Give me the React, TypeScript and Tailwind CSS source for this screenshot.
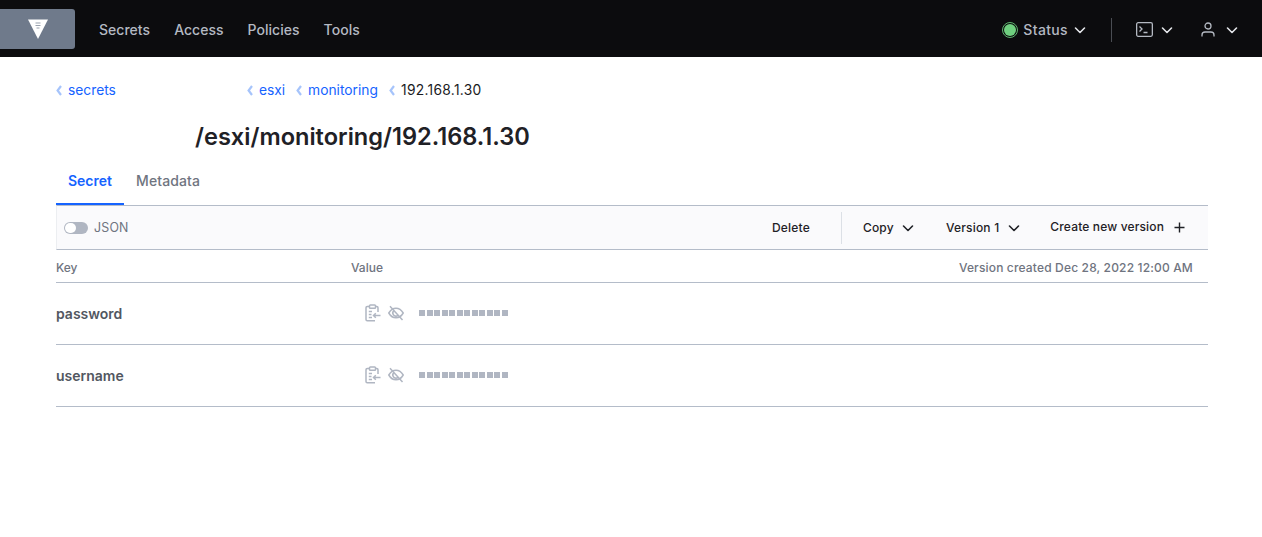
import React from "react";

const Chev = ({ className = "" }: { className?: string }) => (
  <svg width="14" height="14" viewBox="0 0 14 14" fill="none" stroke="currentColor" strokeWidth="1.6" className={className}>
    <path d="M2.5 5 L7 9.5 L11.5 5" strokeLinecap="round" strokeLinejoin="round" />
  </svg>
);

const CrumbChev = () => (
  <svg width="6" height="11" viewBox="0 0 6 11" fill="none" stroke="#a6c4fb" strokeWidth="2.2" className="mr-[6px]">
    <path d="M5 1 L1.6 5.5 L5 10" />
  </svg>
);

const Crumb = ({ label, className = "" }: { label: string; className?: string }) => (
  <span className={`flex items-center ${className}`}>
    <CrumbChev />
    <span className="text-[#1563ff]">{label}</span>
  </span>
);

const ClipIcon = () => (
  <svg width="16" height="18" viewBox="0 0 16 18" fill="none" stroke="#b0b6c2" strokeWidth="1.5">
    <path d="M13 8 V3.8 A1.2 1.2 0 0 0 11.8 2.6 H10.5 M4.5 2.6 H2.2 A1.2 1.2 0 0 0 1 3.8 V15.5 A1.2 1.2 0 0 0 2.2 16.7 H10" />
    <rect x="4.5" y="1" width="6" height="3.2" rx="0.8" />
    <path d="M3.8 7.5 H7 M3.8 10.5 H6.5 M3.8 13.5 H7 M15.5 11.5 H8.5 M10.8 9.2 L8.5 11.5 L10.8 13.8" />
  </svg>
);

const EyeOff = () => (
  <svg width="16" height="16" viewBox="0 0 16 16" fill="none" stroke="#b0b6c2" strokeWidth="1.5">
    <path d="M0.8 8 C3 4.2 5.5 3.2 8 3.2 C10.5 3.2 13 4.2 15.2 8 C13 11.8 10.5 12.8 8 12.8 C5.5 12.8 3 11.8 0.8 8 Z" />
    <path d="M5.8 5.8 A3 3 0 0 0 10.2 10.2" />
    <path d="M2 1.2 L14.5 15" />
  </svg>
);

const Row = ({ name }: { name: string }) => (
  <div className="flex h-[62px] items-center border-b border-[#b4bcc9]">
    <div className="w-[295px] text-sm font-semibold text-[#525761] pt-px">{name}</div>
    <div className="flex items-center pl-[14px] pb-px">
      <ClipIcon />
      <span className="ml-[7px]"><EyeOff /></span>
      <div className="ml-[15px] flex gap-[1.55px]">
        {Array.from({ length: 12 }).map((_, i) => (
          <span key={i} className="h-[6px] w-[6px] bg-[#b0b6c2]" />
        ))}
      </div>
    </div>
  </div>
);

export default function App() {
  return (
    <div className="min-h-[537px] bg-white font-['Inter',sans-serif]">
      <header className="flex h-[57px] items-center bg-[#0c0c0e] pt-px">
        <div className="flex h-10 w-[75px] items-center justify-center rounded-r-[3px] bg-[#6f7a8b]">
          <svg width="20" height="20" viewBox="0 0 20 20">
            <path d="M0 0.5 H20 L10 20 Z" fill="#fff" />
            <path d="M7.5 4 H12.5 M7.5 6.5 H12.5 M8.5 9 H11.5" stroke="#9aa2ae" strokeWidth="1.2" />
          </svg>
        </div>
        <nav className="ml-6 mt-px flex gap-6 text-sm font-medium tracking-[0.03px] text-[#b4b9c2]">
          <span>Secrets</span>
          <span>Access</span>
          <span>Policies</span>
          <span>Tools</span>
        </nav>
        <div className="ml-auto mt-px flex items-center text-[#b4b9c2]">
          <span className="h-4 w-4 rounded-full border-[1.5px] border-[#5fb56f] bg-[#6fd07f] bg-clip-content p-px" />
          <span className="ml-[5px] text-sm font-medium tracking-[0.35px]">Status</span>
          <Chev className="ml-[5px] text-[#e4e6ea]" />
          <span className="ml-6 h-6 w-px bg-[#4a4d53]" />
          <svg width="17" height="15" viewBox="0 0 17 15" fill="none" stroke="#b4b9c2" strokeWidth="1.3" className="ml-6">
            <rect x="0.65" y="0.65" width="15.7" height="13.7" rx="1.5" />
            <path d="M3.5 4.5 L6 7 L3.5 9.5 M7.5 10.5 H11.5" />
          </svg>
          <Chev className="ml-[7px] text-[#e4e6ea]" />
          <svg width="14" height="15" viewBox="0 0 14 15" fill="none" stroke="#b4b9c2" strokeWidth="1.3" className="ml-[27px]">
            <circle cx="7" cy="4" r="3" />
            <path d="M1 14.5 V13 A3 3 0 0 1 4 10 H10 A3 3 0 0 1 13 13 V14.5" />
          </svg>
          <Chev className="ml-[10px] mr-[23px] text-[#e4e6ea]" />
        </div>
      </header>

      <main className="pl-14 pr-[54px]">
        <div className="mt-[25px] flex h-[17px] items-center text-[13.8px] leading-none">
          <Crumb label="secrets" />
          <Crumb label="esxi" className="ml-[131px]" />
          <Crumb label="monitoring" className="ml-[11px]" />
          <span className="ml-[11px] flex items-center">
            <CrumbChev />
            <span className="tracking-[0.3px] text-[#1a1b1e]">192.168.1.30</span>
          </span>
        </div>

        <h1 className="mt-[23px] h-[30px] pl-[139px] text-[23.6px] font-semibold leading-[30px] text-[#1f2126]">
          /esxi/monitoring/192.168.1.30
        </h1>

        <div className="mt-[13px] flex h-[40px] text-sm font-medium">
          <span className="flex w-[68px] items-center justify-center border-b-2 border-[#1563ff] pb-[7px] font-semibold text-[#1563ff]">Secret</span>
          <span className="flex items-center px-3 pb-2 tracking-[0.1px] text-[#6f7480]">Metadata</span>
        </div>

        <div className="flex h-[45px] items-center border-y border-[#b4bcc9] border-l border-l-[#eceef1] bg-[#fafafc] text-xs font-medium tracking-[0.2px] text-[#1f2126]">
          <span className="ml-[7px] flex h-3 w-6 items-center rounded-full bg-[#b0b6c2]">
            <span className="ml-px h-[10px] w-[11px] rounded-full bg-white" />
          </span>
          <span className="ml-[6px] pt-px text-[12.4px] font-normal text-[#6f7480]">JSON</span>
          <div className="ml-auto flex items-center">
            <span>Delete</span>
            <span className="ml-[31px] h-8 w-px bg-[#dce0e6]" />
            <span className="ml-[21px]">Copy</span>
            <Chev className="ml-[7px] text-[#1f2126]" />
            <span className="ml-[31px]">Version 1</span>
            <Chev className="ml-2 text-[#1f2126]" />
            <span className="ml-[29px] mb-[2px] tracking-[0.15px]">Create new version</span>
            <svg width="11" height="11" viewBox="0 0 11 11" stroke="#1f2126" strokeWidth="1.4" className="ml-[10px] mr-[23px]">
              <path d="M5.5 0.5 V10.5 M0.5 5.5 H10.5" />
            </svg>
          </div>
        </div>

        <div className="flex h-[33px] items-center border-b border-[#b4bcc9] pt-[3px] text-xs font-medium text-[#6f7480]">
          <span className="w-[295px]">Key</span>
          <span>Value</span>
          <span className="ml-auto mr-[15px] tracking-[0.16px]">Version created Dec 28, 2022 12:00 AM</span>
        </div>

        <Row name="password" />
        <Row name="username" />
      </main>
    </div>
  );
}
